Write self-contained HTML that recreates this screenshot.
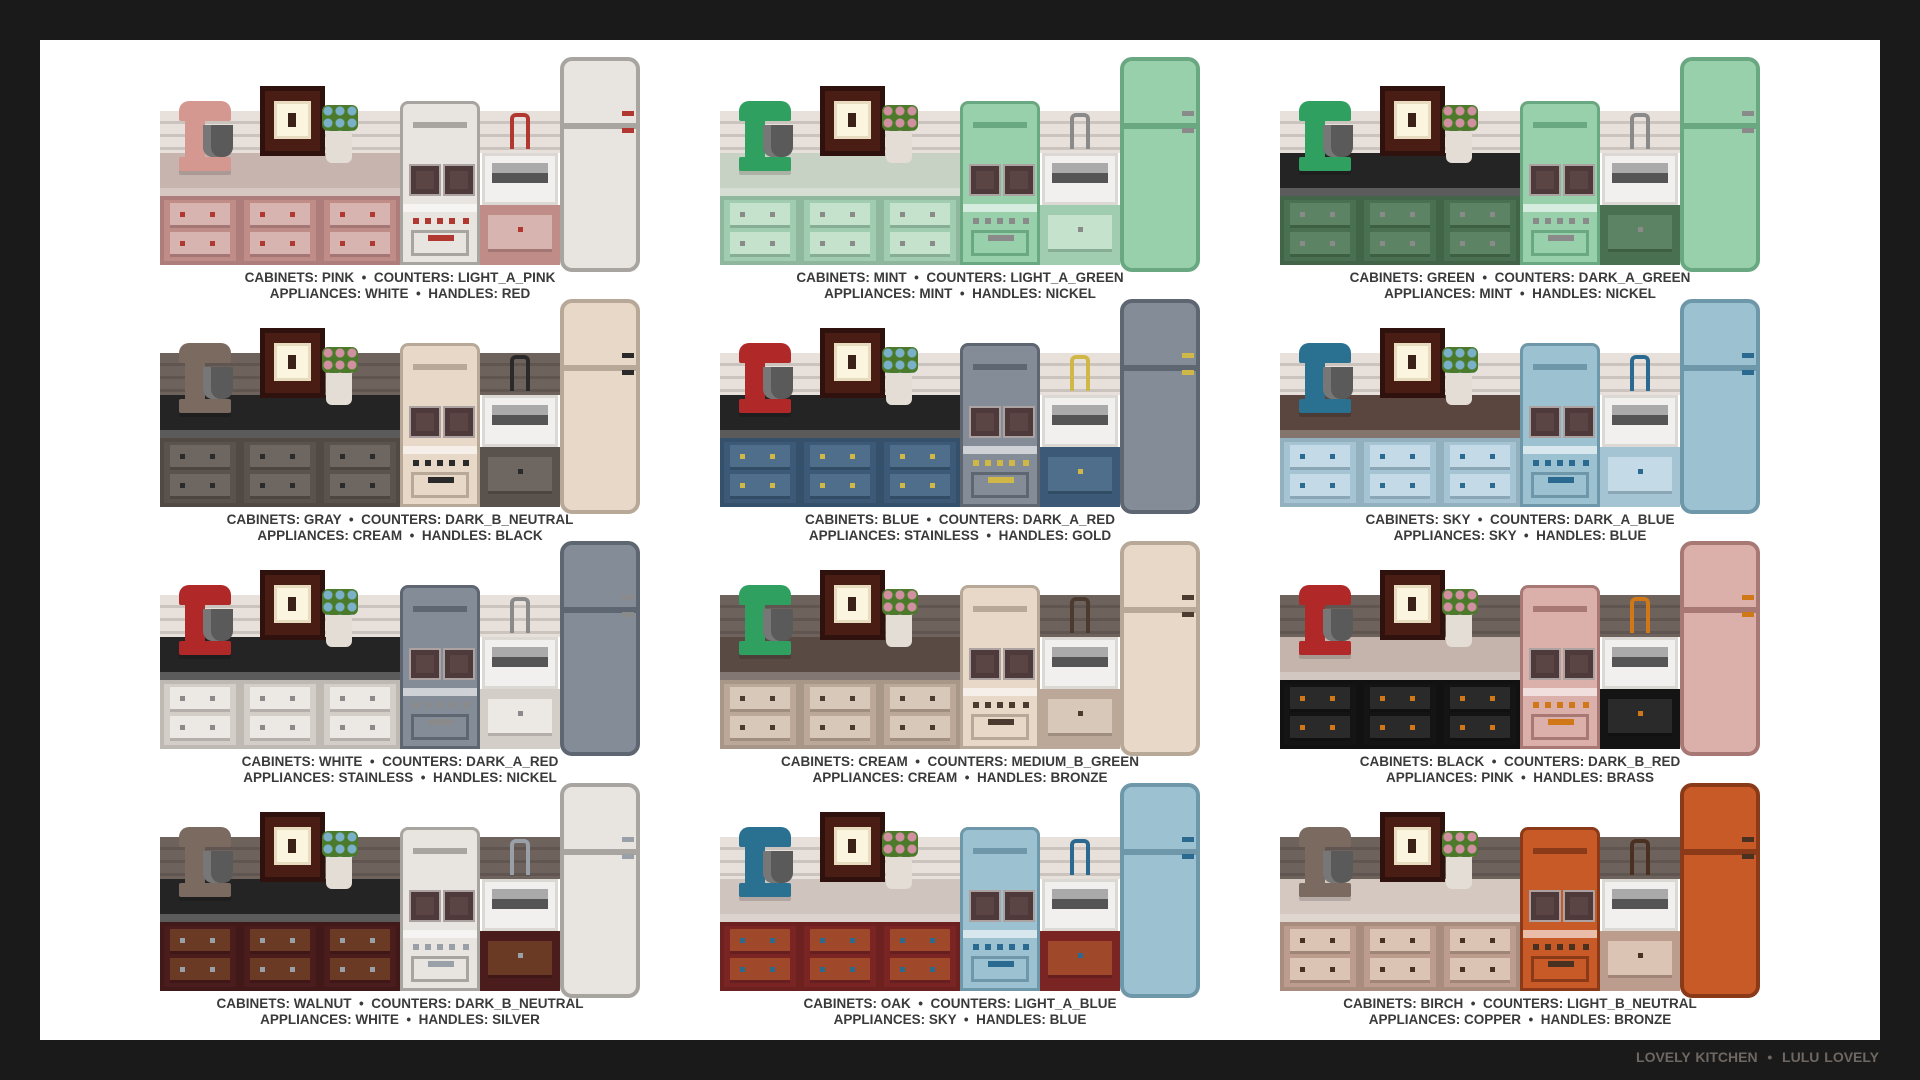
<!DOCTYPE html><html><head><meta charset="utf-8"><style>
body{margin:0;width:1920px;height:1080px;background:#1a1a1a;font-family:"Liberation Sans",sans-serif;overflow:hidden;position:relative}
.pn{position:absolute;left:40px;top:40px;width:1840px;height:1000px;background:#fff}
.ft{position:absolute;right:41px;top:1049px;color:#6e6762;font-weight:bold;font-size:14px;word-spacing:1px}
.t{position:absolute;width:480px;height:250px}
.t>*{position:absolute}
.bs{left:0;top:54px;width:400px;height:42px;background:var(--b);background-image:repeating-linear-gradient(180deg,transparent 0 10px,rgba(0,0,0,.13) 10px 13px)}
.ct{left:0;top:96px;width:240px;height:43px;background:var(--k);box-shadow:inset 0 -8px 0 rgba(255,255,255,.25)}
.cb{left:0;top:139px;width:240px;height:69px;background:var(--c);display:flex}
.cb i{position:relative;width:80px;height:69px;box-shadow:inset 0 0 0 4px rgba(0,0,0,.1)}
.cb i::before,.cb i::after{content:"";position:absolute;left:10px;width:60px;height:22px;background:linear-gradient(var(--h),var(--h)) 10px 9px/5px 5px no-repeat,linear-gradient(var(--h),var(--h)) 40px 9px/5px 5px no-repeat,var(--cl);box-shadow:0 3px 0 rgba(0,0,0,.15)}
.cb i::before{top:7px}.cb i::after{top:36px}
.mx{left:15px;top:44px;width:60px;height:72px}
.mx .hd{position:absolute;left:4px;top:0;width:52px;height:20px;background:var(--m);border-radius:10px 10px 2px 2px}
.mx .cl{position:absolute;left:10px;top:18px;width:20px;height:44px;background:var(--m)}
.mx .bw{position:absolute;left:28px;top:24px;width:30px;height:32px;background:#5a5a5a;border-radius:0 0 10px 10px;box-shadow:inset 8px 0 0 #777}
.mx .bs3{position:absolute;left:4px;top:56px;width:52px;height:14px;background:var(--m);border-radius:2px;box-shadow:0 4px 0 rgba(0,0,0,.15)}
.fr{left:100px;top:29px;width:65px;height:70px;background:#4a1d14;box-shadow:inset 0 0 0 5px #2f120d}
.fr b{position:absolute;left:14px;top:15px;width:37px;height:38px;background:#fbf5e0;box-shadow:inset 0 0 0 3px #e8dcc0}
.fr b::after{content:"";position:absolute;left:14px;top:12px;width:8px;height:14px;background:#3a2218}
.pl{left:160px;top:44px;width:40px;height:64px}
.pl::before{content:"";position:absolute;left:2px;top:4px;width:36px;height:26px;background:radial-gradient(circle,var(--f) 0 4px,transparent 5px) 0 0/12px 12px,#4a7a2a;border-radius:6px}
.pl::after{content:"";position:absolute;left:6px;top:30px;width:26px;height:32px;background:#e4ddd6;border-radius:0 0 6px 6px}
.st{left:240px;top:44px;width:80px;height:164px;background:var(--a);border:3px solid var(--ad);box-sizing:border-box;border-radius:8px 8px 0 0}
.st u{position:absolute;left:10px;top:18px;width:54px;height:6px;background:var(--ad)}
.st .bn{position:absolute;top:60px;width:28px;height:28px;background:#5a4444;box-shadow:inset 0 0 0 5px #4e3a3a;border:2px solid rgba(255,255,255,.5)}
.st .b1{left:6px}.st .b2{left:40px}
.st .ln{position:absolute;left:0;top:100px;width:74px;height:8px;background:rgba(255,255,255,.6)}
.st .kn{position:absolute;left:10px;top:114px;width:6px;height:6px;background:var(--h);box-shadow:12px 0 var(--h),24px 0 var(--h),36px 0 var(--h),50px 0 var(--h)}
.st .od{position:absolute;left:8px;top:126px;width:58px;height:26px;border:3px solid var(--ad);box-sizing:border-box;background:linear-gradient(var(--h),var(--h)) 14px 2px/26px 6px no-repeat}
.sk{left:320px;top:54px;width:80px;height:154px}
.sk .fc{position:absolute;top:2px;height:36px;border:4px solid var(--h);border-bottom:0;border-radius:6px 6px 0 0;box-sizing:border-box;width:20px;left:30px}
.sk .bs2{position:absolute;left:2px;top:42px;width:76px;height:52px;background:#f2f0ee;box-shadow:inset 0 0 0 3px #dcd8d4}
.sk .bs2::after{content:"";position:absolute;left:10px;top:10px;width:56px;height:20px;background:linear-gradient(#aaa 0 50%,#555 50%)}
.sk .cab{position:absolute;left:0;top:94px;width:80px;height:60px;background:var(--c)}
.sk .cab::after{content:"";position:absolute;left:8px;top:10px;width:64px;height:34px;background:linear-gradient(var(--h),var(--h)) 30px 12px/5px 5px no-repeat,var(--cl);box-shadow:0 3px 0 rgba(0,0,0,.15)}
.fg{left:400px;top:0;width:80px;height:215px;background:var(--a);border:4px solid var(--ad);box-sizing:border-box;border-radius:12px}
.fg i{position:absolute;left:0;top:62px;width:72px;height:6px;background:var(--ad)}
.fg s{position:absolute;left:58px;top:50px;width:12px;height:5px;background:var(--h);box-shadow:0 17px var(--h)}
.t p{left:0;top:213px;width:480px;margin:0;text-align:center;font-size:13.5px;line-height:16px;font-weight:bold;color:#3a3a3a;word-spacing:0}
</style></head><body>
<div class="pn"></div>
<div class="ft">LOVELY KITCHEN &nbsp;•&nbsp; LULU LOVELY</div>

<div class="t" style="left:160px;top:57px;--c:#c08c88;--cl:#d8b4b0;--k:#c8b4ae;--b:#e8e0da;--a:#e8e4e0;--ad:#a8a4a0;--h:#b03830;--m:#d49890;--f:#7ab0c8">
<div class="bs"></div><div class="ct"></div><div class="cb"><i></i><i></i><i></i></div>
<div class="mx"><i class="cl"></i><i class="bw"></i><i class="hd"></i><i class="bs3"></i></div><div class="fr"><b></b></div><div class="pl"></div>
<div class="st"><u></u><s class="bn b1"></s><s class="bn b2"></s><s class="ln"></s><s class="kn"></s><s class="od"></s></div>
<div class="sk"><u class="fc"></u><b class="bs2"></b><i class="cab"></i></div>
<div class="fg"><i></i><s></s></div>
<p>CABINETS: PINK &nbsp;•&nbsp; COUNTERS: LIGHT_A_PINK<br>APPLIANCES: WHITE &nbsp;•&nbsp; HANDLES: RED</p></div>

<div class="t" style="left:720px;top:57px;--c:#a0ccb0;--cl:#c4e2cc;--k:#c8d2c4;--b:#e8e0da;--a:#98d0ac;--ad:#6aa882;--h:#8a8a8a;--m:#30a060;--f:#d090a0">
<div class="bs"></div><div class="ct"></div><div class="cb"><i></i><i></i><i></i></div>
<div class="mx"><i class="cl"></i><i class="bw"></i><i class="hd"></i><i class="bs3"></i></div><div class="fr"><b></b></div><div class="pl"></div>
<div class="st"><u></u><s class="bn b1"></s><s class="bn b2"></s><s class="ln"></s><s class="kn"></s><s class="od"></s></div>
<div class="sk"><u class="fc"></u><b class="bs2"></b><i class="cab"></i></div>
<div class="fg"><i></i><s></s></div>
<p>CABINETS: MINT &nbsp;•&nbsp; COUNTERS: LIGHT_A_GREEN<br>APPLIANCES: MINT &nbsp;•&nbsp; HANDLES: NICKEL</p></div>

<div class="t" style="left:1280px;top:57px;--c:#4a7052;--cl:#5c8464;--k:#242424;--b:#e8e0da;--a:#98d0ac;--ad:#6aa882;--h:#8a8a8a;--m:#30a060;--f:#d090a0">
<div class="bs"></div><div class="ct"></div><div class="cb"><i></i><i></i><i></i></div>
<div class="mx"><i class="cl"></i><i class="bw"></i><i class="hd"></i><i class="bs3"></i></div><div class="fr"><b></b></div><div class="pl"></div>
<div class="st"><u></u><s class="bn b1"></s><s class="bn b2"></s><s class="ln"></s><s class="kn"></s><s class="od"></s></div>
<div class="sk"><u class="fc"></u><b class="bs2"></b><i class="cab"></i></div>
<div class="fg"><i></i><s></s></div>
<p>CABINETS: GREEN &nbsp;•&nbsp; COUNTERS: DARK_A_GREEN<br>APPLIANCES: MINT &nbsp;•&nbsp; HANDLES: NICKEL</p></div>

<div class="t" style="left:160px;top:299px;--c:#5a524c;--cl:#6e6660;--k:#242424;--b:#6e625c;--a:#e8d8c8;--ad:#b8a898;--h:#2a2a2a;--m:#7a6a60;--f:#d090a0">
<div class="bs"></div><div class="ct"></div><div class="cb"><i></i><i></i><i></i></div>
<div class="mx"><i class="cl"></i><i class="bw"></i><i class="hd"></i><i class="bs3"></i></div><div class="fr"><b></b></div><div class="pl"></div>
<div class="st"><u></u><s class="bn b1"></s><s class="bn b2"></s><s class="ln"></s><s class="kn"></s><s class="od"></s></div>
<div class="sk"><u class="fc"></u><b class="bs2"></b><i class="cab"></i></div>
<div class="fg"><i></i><s></s></div>
<p>CABINETS: GRAY &nbsp;•&nbsp; COUNTERS: DARK_B_NEUTRAL<br>APPLIANCES: CREAM &nbsp;•&nbsp; HANDLES: BLACK</p></div>

<div class="t" style="left:720px;top:299px;--c:#3c5a78;--cl:#4e6e8c;--k:#242424;--b:#e8e0da;--a:#848c98;--ad:#5e6672;--h:#d0b848;--m:#b02828;--f:#7ab0c8">
<div class="bs"></div><div class="ct"></div><div class="cb"><i></i><i></i><i></i></div>
<div class="mx"><i class="cl"></i><i class="bw"></i><i class="hd"></i><i class="bs3"></i></div><div class="fr"><b></b></div><div class="pl"></div>
<div class="st"><u></u><s class="bn b1"></s><s class="bn b2"></s><s class="ln"></s><s class="kn"></s><s class="od"></s></div>
<div class="sk"><u class="fc"></u><b class="bs2"></b><i class="cab"></i></div>
<div class="fg"><i></i><s></s></div>
<p>CABINETS: BLUE &nbsp;•&nbsp; COUNTERS: DARK_A_RED<br>APPLIANCES: STAINLESS &nbsp;•&nbsp; HANDLES: GOLD</p></div>

<div class="t" style="left:1280px;top:299px;--c:#a4c4d4;--cl:#c4dae6;--k:#5a463e;--b:#e8e0da;--a:#9cc2d2;--ad:#6e98aa;--h:#2a6a90;--m:#2a7090;--f:#7ab0c8">
<div class="bs"></div><div class="ct"></div><div class="cb"><i></i><i></i><i></i></div>
<div class="mx"><i class="cl"></i><i class="bw"></i><i class="hd"></i><i class="bs3"></i></div><div class="fr"><b></b></div><div class="pl"></div>
<div class="st"><u></u><s class="bn b1"></s><s class="bn b2"></s><s class="ln"></s><s class="kn"></s><s class="od"></s></div>
<div class="sk"><u class="fc"></u><b class="bs2"></b><i class="cab"></i></div>
<div class="fg"><i></i><s></s></div>
<p>CABINETS: SKY &nbsp;•&nbsp; COUNTERS: DARK_A_BLUE<br>APPLIANCES: SKY &nbsp;•&nbsp; HANDLES: BLUE</p></div>

<div class="t" style="left:160px;top:541px;--c:#d4cec8;--cl:#ece8e4;--k:#242424;--b:#e8e0da;--a:#848c98;--ad:#5e6672;--h:#8a8a8a;--m:#b02828;--f:#7ab0c8">
<div class="bs"></div><div class="ct"></div><div class="cb"><i></i><i></i><i></i></div>
<div class="mx"><i class="cl"></i><i class="bw"></i><i class="hd"></i><i class="bs3"></i></div><div class="fr"><b></b></div><div class="pl"></div>
<div class="st"><u></u><s class="bn b1"></s><s class="bn b2"></s><s class="ln"></s><s class="kn"></s><s class="od"></s></div>
<div class="sk"><u class="fc"></u><b class="bs2"></b><i class="cab"></i></div>
<div class="fg"><i></i><s></s></div>
<p>CABINETS: WHITE &nbsp;•&nbsp; COUNTERS: DARK_A_RED<br>APPLIANCES: STAINLESS &nbsp;•&nbsp; HANDLES: NICKEL</p></div>

<div class="t" style="left:720px;top:541px;--c:#bca898;--cl:#d8c8ba;--k:#5a4a44;--b:#6e625c;--a:#e8d8c8;--ad:#b8a898;--h:#4a3a30;--m:#30a060;--f:#d090a0">
<div class="bs"></div><div class="ct"></div><div class="cb"><i></i><i></i><i></i></div>
<div class="mx"><i class="cl"></i><i class="bw"></i><i class="hd"></i><i class="bs3"></i></div><div class="fr"><b></b></div><div class="pl"></div>
<div class="st"><u></u><s class="bn b1"></s><s class="bn b2"></s><s class="ln"></s><s class="kn"></s><s class="od"></s></div>
<div class="sk"><u class="fc"></u><b class="bs2"></b><i class="cab"></i></div>
<div class="fg"><i></i><s></s></div>
<p>CABINETS: CREAM &nbsp;•&nbsp; COUNTERS: MEDIUM_B_GREEN<br>APPLIANCES: CREAM &nbsp;•&nbsp; HANDLES: BRONZE</p></div>

<div class="t" style="left:1280px;top:541px;--c:#141414;--cl:#2a2a2a;--k:#c4b4ac;--b:#6e625c;--a:#dcb0aa;--ad:#a87874;--h:#d07818;--m:#b02828;--f:#d090a0">
<div class="bs"></div><div class="ct"></div><div class="cb"><i></i><i></i><i></i></div>
<div class="mx"><i class="cl"></i><i class="bw"></i><i class="hd"></i><i class="bs3"></i></div><div class="fr"><b></b></div><div class="pl"></div>
<div class="st"><u></u><s class="bn b1"></s><s class="bn b2"></s><s class="ln"></s><s class="kn"></s><s class="od"></s></div>
<div class="sk"><u class="fc"></u><b class="bs2"></b><i class="cab"></i></div>
<div class="fg"><i></i><s></s></div>
<p>CABINETS: BLACK &nbsp;•&nbsp; COUNTERS: DARK_B_RED<br>APPLIANCES: PINK &nbsp;•&nbsp; HANDLES: BRASS</p></div>

<div class="t" style="left:160px;top:783px;--c:#4a1c1c;--cl:#6a3a24;--k:#242424;--b:#6e625c;--a:#e8e4e0;--ad:#a8a4a0;--h:#9aa0a8;--m:#7a6a60;--f:#7ab0c8">
<div class="bs"></div><div class="ct"></div><div class="cb"><i></i><i></i><i></i></div>
<div class="mx"><i class="cl"></i><i class="bw"></i><i class="hd"></i><i class="bs3"></i></div><div class="fr"><b></b></div><div class="pl"></div>
<div class="st"><u></u><s class="bn b1"></s><s class="bn b2"></s><s class="ln"></s><s class="kn"></s><s class="od"></s></div>
<div class="sk"><u class="fc"></u><b class="bs2"></b><i class="cab"></i></div>
<div class="fg"><i></i><s></s></div>
<p>CABINETS: WALNUT &nbsp;•&nbsp; COUNTERS: DARK_B_NEUTRAL<br>APPLIANCES: WHITE &nbsp;•&nbsp; HANDLES: SILVER</p></div>

<div class="t" style="left:720px;top:783px;--c:#7a2424;--cl:#a0482a;--k:#d0c4be;--b:#e8e0da;--a:#9cc2d2;--ad:#6e98aa;--h:#2a6a90;--m:#2a7090;--f:#d090a0">
<div class="bs"></div><div class="ct"></div><div class="cb"><i></i><i></i><i></i></div>
<div class="mx"><i class="cl"></i><i class="bw"></i><i class="hd"></i><i class="bs3"></i></div><div class="fr"><b></b></div><div class="pl"></div>
<div class="st"><u></u><s class="bn b1"></s><s class="bn b2"></s><s class="ln"></s><s class="kn"></s><s class="od"></s></div>
<div class="sk"><u class="fc"></u><b class="bs2"></b><i class="cab"></i></div>
<div class="fg"><i></i><s></s></div>
<p>CABINETS: OAK &nbsp;•&nbsp; COUNTERS: LIGHT_A_BLUE<br>APPLIANCES: SKY &nbsp;•&nbsp; HANDLES: BLUE</p></div>

<div class="t" style="left:1280px;top:783px;--c:#bc9c8c;--cl:#dcc4b4;--k:#d4c8c0;--b:#6e625c;--a:#c85a28;--ad:#8a3a18;--h:#4a3020;--m:#7a6a60;--f:#d090a0">
<div class="bs"></div><div class="ct"></div><div class="cb"><i></i><i></i><i></i></div>
<div class="mx"><i class="cl"></i><i class="bw"></i><i class="hd"></i><i class="bs3"></i></div><div class="fr"><b></b></div><div class="pl"></div>
<div class="st"><u></u><s class="bn b1"></s><s class="bn b2"></s><s class="ln"></s><s class="kn"></s><s class="od"></s></div>
<div class="sk"><u class="fc"></u><b class="bs2"></b><i class="cab"></i></div>
<div class="fg"><i></i><s></s></div>
<p>CABINETS: BIRCH &nbsp;•&nbsp; COUNTERS: LIGHT_B_NEUTRAL<br>APPLIANCES: COPPER &nbsp;•&nbsp; HANDLES: BRONZE</p></div>

</body></html>
